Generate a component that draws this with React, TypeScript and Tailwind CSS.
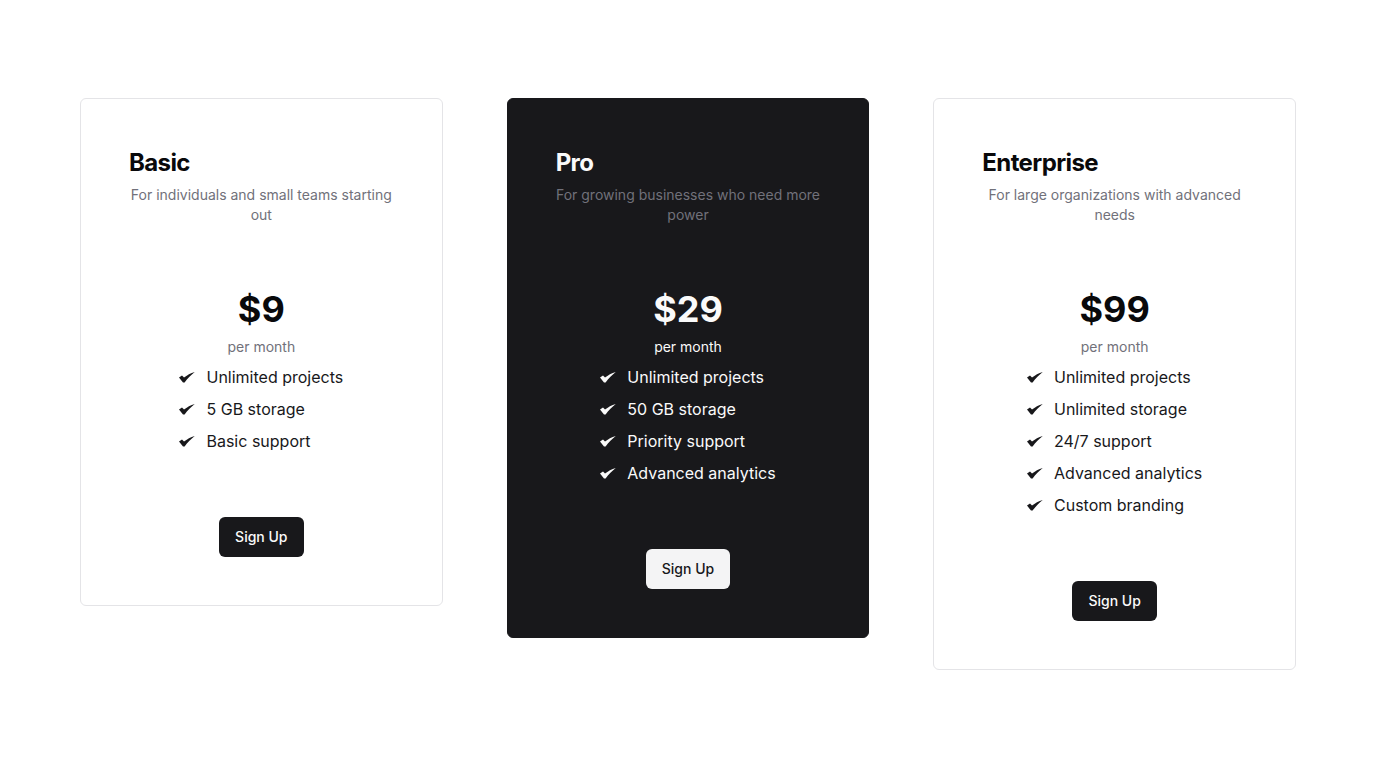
import React from 'react'

type Plan = {
  name: string
  description: string
  price: string
  features: string[]
  featured?: boolean
}

const plans: Plan[] = [
  {
    name: 'Basic',
    description: 'For individuals and small teams starting out',
    price: '$9',
    features: ['Unlimited projects', '5 GB storage', 'Basic support'],
  },
  {
    name: 'Pro',
    description: 'For growing businesses who need more power',
    price: '$29',
    features: ['Unlimited projects', '50 GB storage', 'Priority support', 'Advanced analytics'],
    featured: true,
  },
  {
    name: 'Enterprise',
    description: 'For large organizations with advanced needs',
    price: '$99',
    features: ['Unlimited projects', 'Unlimited storage', '24/7 support', 'Advanced analytics', 'Custom branding'],
  },
]

function Check() {
  return (
    <svg width="16" height="11" viewBox="0 0 16 11" className="mr-[11px] shrink-0" fill="currentColor">
      <path d="M0 5.6 L3 3.6 L5 5.6 C8 3.3 11.6 1.1 15.8 0 C12.4 2.6 8.4 6.6 5.6 10.6 L4 10.6 Z" />
    </svg>
  )
}

function PlanCard({ plan }: { plan: Plan }) {
  const dark = plan.featured
  return (
    <div
      className={`rounded-md border px-12 py-12 ${
        dark ? 'bg-[#18181b] border-[#18181b] text-[#fafafa]' : 'bg-white border-[#e4e4e7] text-[#09090b]'
      }`}
    >
      {/* Header */}
      <h3 className="text-2xl leading-8 font-bold tracking-tight">{plan.name}</h3>
      <p className="mt-1.5 text-sm leading-5 text-center text-[#71717a]">{plan.description}</p>

      {/* Price */}
      <div className="mt-16 text-center">
        <div className="text-4xl leading-10 font-bold">{plan.price}</div>
        <div className={`mt-2 text-sm leading-5 ${dark ? 'text-[#fafafa]' : 'text-[#71717a]'}`}>per month</div>
      </div>

      {/* Features */}
      <ul className="mt-2 mx-auto w-fit space-y-2">
        {plan.features.map((f) => (
          <li key={f} className={`flex items-center text-base leading-6 ${dark ? 'text-[#fafafa]' : 'text-[#18181b]'}`}>
            <Check />
            {f}
          </li>
        ))}
      </ul>

      {/* Action */}
      <div className="mt-16 flex justify-center">
        <button
          className={`h-10 px-4 rounded-md text-sm font-medium ${
            dark ? 'bg-[#f4f4f5] text-[#18181b]' : 'bg-[#18181b] text-[#fafafa]'
          }`}
        >
          Sign Up
        </button>
      </div>
    </div>
  )
}

export default function App() {
  return (
    <div className="min-h-screen bg-white font-['Inter',sans-serif] antialiased">
      <div className="grid grid-cols-3 gap-16 px-20 pt-[98px] items-start">
        {plans.map((plan) => (
          <PlanCard key={plan.name} plan={plan} />
        ))}
      </div>
    </div>
  )
}
